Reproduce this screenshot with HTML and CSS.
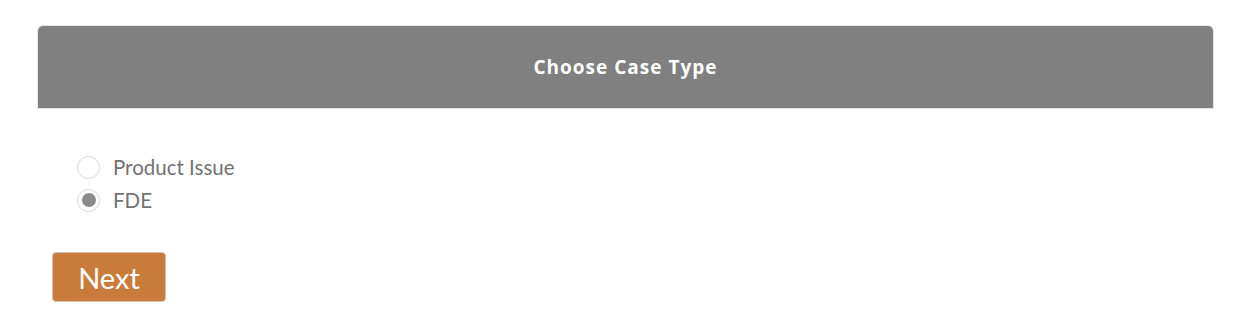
FILE: index.html
```html
<!DOCTYPE html>
<html>
<head>
<meta charset="utf-8">
<link rel="stylesheet" href="styles.css">
</head>
<body>
<div class="page">
  <div class="card">
    <div class="card-header">Choose Case Type</div>
    <div class="card-body">
      <div class="radio-group">
        <label class="radio-row">
          <span class="radio"></span>
          <span class="radio-label">Product Issue</span>
        </label>
        <label class="radio-row">
          <span class="radio checked"></span>
          <span class="radio-label">FDE</span>
        </label>
      </div>
      <button class="next-btn">Next</button>
    </div>
  </div>
</div>
</body>
</html>
```
FILE: styles.css
```css
html, body {
  margin: 0;
  padding: 0;
  background: #ffffff;
}
.page {
  padding: 26px 21px 0 38px;
}
.card-header {
  height: 82px;
  background: #808080;
  border-radius: 5px 5px 0 0;
  box-shadow: 0 0 0 1px #e6e6e6;
  color: #ffffff;
  font-family: "Open Sans", "DejaVu Sans", sans-serif;
  font-weight: 700;
  font-size: 19px;
  display: flex;
  align-items: center;
  justify-content: center;
  letter-spacing: 1px;
}
.card-body {
  padding: 48px 0 0 14px;
}
.radio-group {
  display: flex;
  flex-direction: column;
  gap: 11px;
  padding-left: 25px;
}
.radio-row {
  display: flex;
  align-items: center;
  gap: 13px;
  height: 22px;
}
.radio {
  width: 21px;
  height: 21px;
  border: 1px solid #d9d9d9;
  border-radius: 50%;
  position: relative;
  background: #fff;
}
.radio.checked::after {
  content: "";
  position: absolute;
  left: 3.5px;
  top: 3.5px;
  width: 14px;
  height: 14px;
  border-radius: 50%;
  background: #8a8a8a;
}
.radio-label {
  font-family: Lato, "Liberation Sans", sans-serif;
  font-size: 20.5px;
  color: #727272;
}
.next-btn {
  margin-top: 41px;
  width: 114px;
  height: 50px;
  background: #c97b3c;
  border: 1px solid #dcc0a8;
  border-radius: 4px;
  color: #ffffff;
  font-family: Lato, "Liberation Sans", sans-serif;
  font-size: 29px;
  padding: 0;
  display: flex;
  align-items: center;
  justify-content: center;
}
```
